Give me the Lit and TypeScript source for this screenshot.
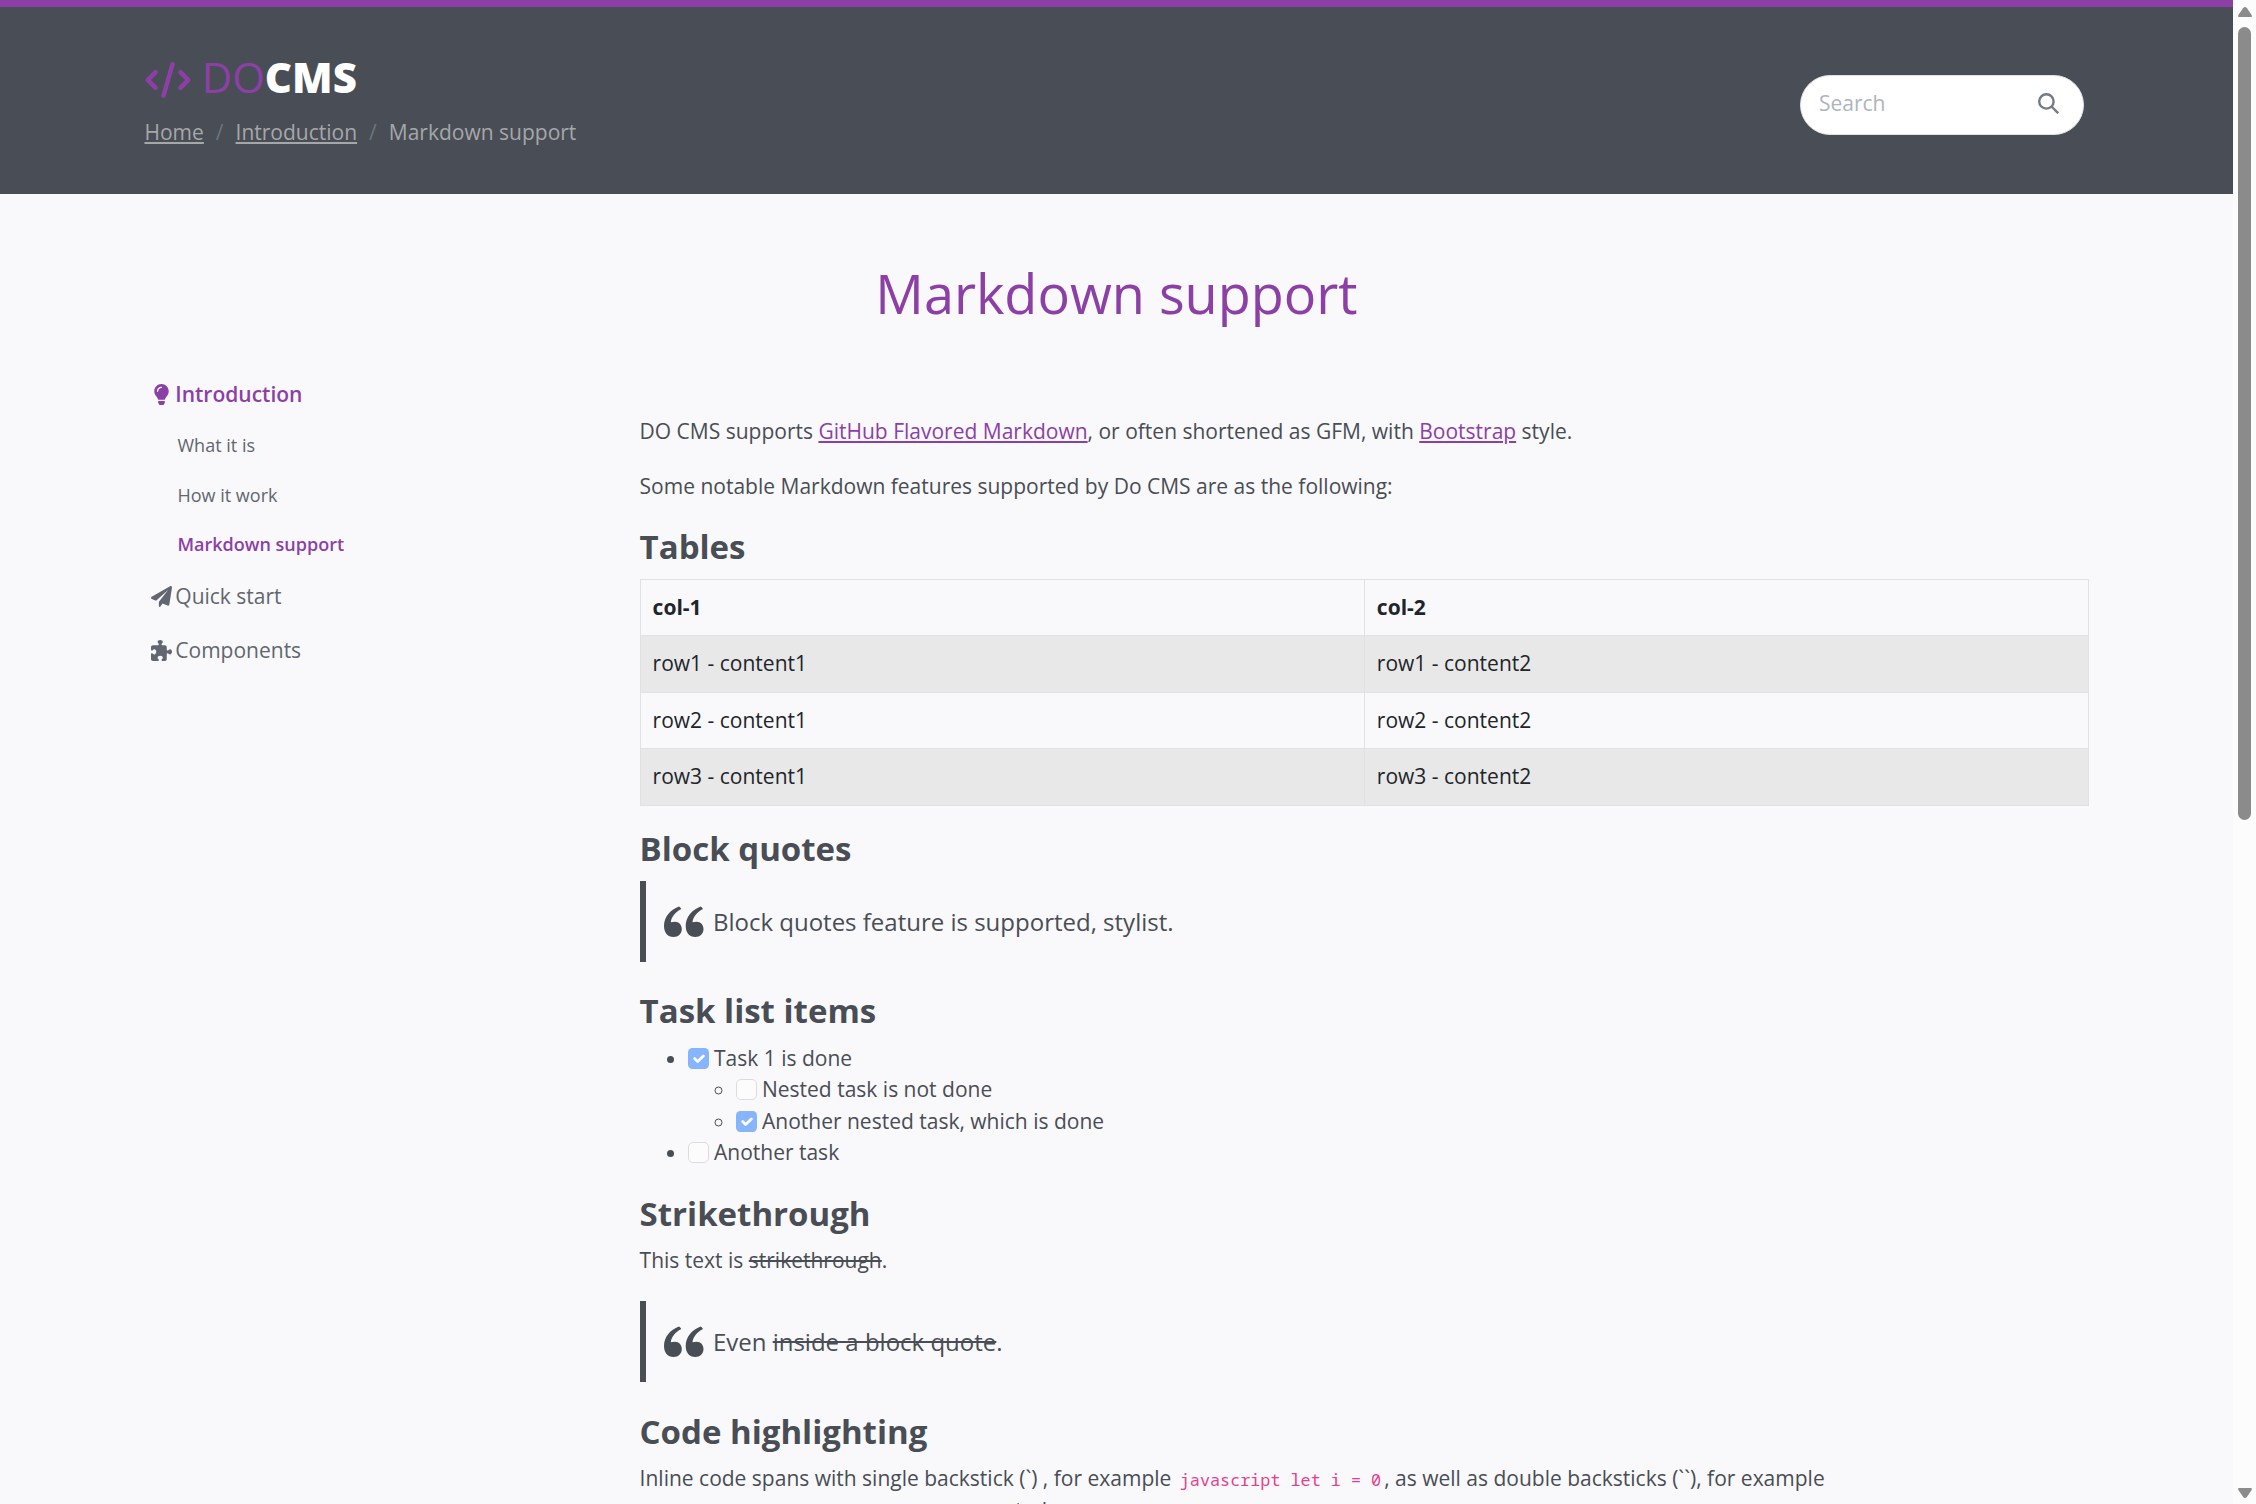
import { LitElement, html, css, svg } from "lit";
import { customElement } from "lit/decorators.js";

const lightbulb = svg`<path fill="currentColor" d="M96.06 454.35c.01 6.29 1.87 12.45 5.36 17.69l17.09 25.69a31.99 31.99 0 0 0 26.64 14.28h61.71a31.99 31.99 0 0 0 26.64-14.28l17.09-25.69a31.989 31.989 0 0 0 5.36-17.69l.04-38.35H96.01l.05 38.35zM0 176c0 44.37 16.45 84.85 43.56 115.78 16.52 18.85 42.36 58.23 52.21 91.45.04.26.07.52.11.78h160.24c.04-.26.07-.51.11-.78 9.85-33.22 35.69-72.6 52.21-91.45C335.55 260.85 352 220.37 352 176 352 78.61 272.91-.3 175.45 0 73.44.31 0 82.97 0 176zm176-80c-44.11 0-80 35.89-80 80 0 8.84-7.16 16-16 16s-16-7.16-16-16c0-61.76 50.24-112 112-112 8.84 0 16 7.16 16 16s-7.16 16-16 16z"/>`;
const plane = svg`<path fill="currentColor" d="M511.6 36.86l-64 415.1c-1.5 9.734-7.375 18.22-15.97 23.05c-4.844 2.719-10.27 4.097-15.68 4.097c-4.188 0-8.319-.8154-12.29-2.472l-122.6-51.1l-50.86 76.29C226.3 508.5 219.8 512 212.8 512C201.300 512 192 502.700 192 491.200v-96.180c0-7.115 2.372-14.030 6.742-19.640L416 96.010l-293.700 264.300L19.690 317.500C8.438 312.800 .8125 302.200 .0625 289.100s5.469-23.720 16.060-29.770l448-255.100c10.690-6.109 23.880-5.547 34 1.406S513.500 24.720 511.600 36.860z"/>`;
const puzzle = svg`<path fill="currentColor" d="M192 104.800c0-9.200-5.800-17.300-13.200-22.800C167.200 73.300 160 61.300 160 48c0-26.500 28.700-48 64-48s64 21.500 64 48c0 13.300-7.200 25.300-18.800 34c-7.400 5.500-13.200 13.600-13.200 22.800c0 12.800 10.400 23.200 23.200 23.200H336c26.500 0 48 21.500 48 48v56.800c0 12.800 10.400 23.200 23.200 23.200c9.200 0 17.300-5.800 22.800-13.200c8.700-11.600 20.700-18.800 34-18.800c26.500 0 48 28.700 48 64s-21.500 64-48 64c-13.300 0-25.300-7.200-34-18.800c-5.500-7.400-13.600-13.200-22.800-13.200c-12.800 0-23.200 10.400-23.200 23.200V464c0 26.500-21.500 48-48 48H279.200c-12.800 0-23.200-10.400-23.200-23.200c0-9.200 5.800-17.300 13.200-22.800c11.600-8.700 18.800-20.700 18.800-34c0-26.500-28.700-48-64-48s-64 21.500-64 48c0 13.300 7.200 25.300 18.800 34c7.400 5.500 13.200 13.600 13.200 22.800c0 12.800-10.400 23.200-23.200 23.200H48c-26.500 0-48-21.500-48-48V343.200C0 330.400 10.400 320 23.200 320c9.200 0 17.300 5.800 22.800 13.200C54.700 344.800 66.700 352 80 352c26.500 0 48-28.700 48-64s-21.500-64-48-64c-13.300 0-25.300 7.200-34 18.800C40.500 250.200 32.400 256 23.200 256C10.400 256 0 245.600 0 232.800V176c0-26.500 21.500-48 48-48H168.800c12.800 0 23.200-10.400 23.200-23.200z"/>`;
const quotePath = "M15 .5Q16.400 1 17.300 3C11 6.500 7.300 11 6.800 16.300 8 15.900 9.400 15.700 11 15.700c4 0 6.800 3.200 6.800 7.300 0 4.700-3.400 8-8.300 8C3.500 31 0 26.500 0 20 0 11 6 4 15 .5Z";
const quote = html`<svg class="quote-mark" viewBox="0 0 40 31" aria-hidden="true"><path fill="currentColor" d=${quotePath}/><path fill="currentColor" transform="translate(21.700 0)" d=${quotePath}/></svg>`;

const box = (done: boolean) => html`<svg class="box" viewBox="0 0 21 21" aria-hidden="true">
  ${done
    ? svg`<rect width="21" height="21" rx="4.5" fill="#86b4fd"/><path d="m6.600 10.600 3 2.800 5.800-5.500" fill="none" stroke="#fff" stroke-width="2.800" stroke-linecap="round" stroke-linejoin="round"/>`
    : svg`<rect x=".5" y=".5" width="20" height="20" rx="4.500" fill="#fcfcfd" stroke="#dcdcdd"/>`}
</svg>`;

@customElement("app-root")
export class AppRoot extends LitElement {
  static styles = css`
    :host { display: flex; width: 2256px; height: 1504px; overflow: hidden; background: #f9f9fb; color: #494d55; font: 21px/31.5px "Open Sans", sans-serif; }
    * { box-sizing: border-box; }
    svg { display: block; flex: none; }
    h1, h2, p, ul, blockquote { margin: 0; padding: 0; }
    .page { width: 2233px; }
    .header { height: 194px; border-top: 7px solid #8c40a6; background: #494d55; display: flex; justify-content: space-between; padding: 46px 149px 0 144.5px; }
    .logo { display: flex; align-items: center; height: 52px; font-size: 42px; line-height: 52px; color: #8c40a6; }
    .logo svg { margin: 2px 11.2px 0 0; }
    .logo span { padding-bottom: 5px; }
    .logo b { color: #fff; font-weight: 800; }
    .crumbs { display: flex; gap: 12px; margin-top: 12px; line-height: 31.5px; color: #a6a7a9; }
    .crumbs i { font-style: normal; color: #6c757d; }
    .search { margin-top: 22px; width: 284px; height: 60px; border-radius: 30px; border: 1px solid #dee2e6; background: #fff; display: flex; align-items: center; justify-content: space-between; padding: 0 24px 3px 18px; color: #adb5bd; }
    .title { margin-top: 61px; text-align: center; font-size: 54px; line-height: 76px; font-weight: 400; color: #8c40a6; }
    .body { display: flex; padding: 47px 0 0 151px; }
    .side { width: 488.6px; padding-top: 0.7px; color: #616670; }
    .top { display: flex; align-items: center; height: 32px; }
    .top svg { width: 21px; height: 21px; margin-right: 3.3px; }
    .sub { padding-left: 26.5px; font-size: 18px; height: 49.5px; line-height: 49.5px; }
    .on { color: #8c40a6; font-weight: 600; }
    .subs { padding: 10.8px 0 10.7px; }
    .gap { margin-bottom: 22px; }
    .doc { width: 1449.5px; padding-top: 37.8px; }
    .doc p { margin-bottom: 24px; }
    .doc a { color: #8c40a6; text-decoration: underline; }
    h2 { font-size: 33px; line-height: 39.6px; font-weight: 700; margin-bottom: 12px; }
    table { width: 1449.5px; border-collapse: collapse; color: #212529; table-layout: fixed; margin: 12.3px 0 23.6px; }
    th, td { border: 1px solid #dee2e6; padding: 12px; text-align: left; line-height: 31.5px; height: 56.5px; }
    .stripe { background: #e8e8e8; }
    blockquote { display: flex; align-items: center; height: 81px; border-left: 6px solid #494d55; padding-left: 18px; font-size: 24px; margin-bottom: 29.4px; }
    p + blockquote { margin-bottom: 29.8px; }
    .quote-mark { width: 40px; height: 31px; margin: 1px 9.3px 0 0; }
    ul { padding-left: 48px; }
    .tasks { margin-bottom: 25px; }
    .box { display: inline-block; width: 21px; height: 21px; vertical-align: -3px; margin-right: 5.4px; }
    code { font: 16.8px "Noto Sans Mono", "DejaVu Sans Mono", monospace; color: #e83e8c; padding: 0 3px; }
    .next { padding-right: 8px; }
    .bar { width: 23px; background: #fcfcfc; display: flex; flex-direction: column; align-items: center; padding: 7px 0 6px; }
    .thumb { width: 13px; height: 793px; border-radius: 7px; background: #8b8b8b; margin: 10px 0 auto 0; }
  `;

  render() {
    return html`
      <div class="page">
        <header class="header">
          <div>
            <div class="logo">
              <svg width="46" height="36" viewBox="0 0 640 512"><path fill="currentColor" d="M392.800 1.200c-17-4.900-34.700 5-39.600 22l-128 448c-4.900 17 5 34.700 22 39.600s34.700-5 39.600-22l128-448c4.900-17-5-34.700-22-39.600zm80.600 120.100c-12.500 12.500-12.500 32.800 0 45.300L562.700 256l-89.400 89.400c-12.500 12.500-12.500 32.800 0 45.300s32.800 12.500 45.300 0l112-112c12.500-12.500 12.500-32.800 0-45.300l-112-112c-12.500-12.500-32.800-12.500-45.300 0zm-306.700 0c-12.500-12.500-32.800-12.500-45.300 0l-112 112c-12.500 12.500-12.500 32.800 0 45.300l112 112c12.500 12.500 32.800 12.500 45.300 0s12.500-32.800 0-45.300L77.300 256l89.400-89.400c12.500-12.500 12.500-32.800 0-45.300z"/></svg>
              <span>DO<b>CMS</b></span>
            </div>
            <nav class="crumbs"><u>Home</u><i>/</i><u>Introduction</u><i>/</i><span>Markdown support</span></nav>
          </div>
          <div class="search"><span>Search</span>
            <svg width="21" height="21" viewBox="0 0 21 21" fill="none" stroke="#747a88" stroke-width="2.4"><circle cx="8.4" cy="8.4" r="7.2"/><path d="m13.500 13.500 6.700 6.700"/></svg>
          </div>
        </header>
        <h1 class="title">Markdown support</h1>
        <div class="body">
          <aside class="side">
            <div class="top on"><svg viewBox="-80 0 512 512">${lightbulb}</svg>Introduction</div>
            <div class="subs">
              <div class="sub">What it is</div>
              <div class="sub">How it work</div>
              <div class="sub on">Markdown support</div>
            </div>
            <div class="top gap"><svg viewBox="0 0 512 512">${plane}</svg>Quick start</div>
            <div class="top"><svg viewBox="0 0 512 512">${puzzle}</svg>Components</div>
          </aside>
          <main class="doc">
            <p>DO CMS supports <a>GitHub Flavored Markdown</a>, or often shortened as GFM, with <a>Bootstrap</a> style.</p>
            <p>Some notable Markdown features supported by Do CMS are as the following:</p>
            <h2>Tables</h2>
            <table>
              <tr><th>col-1</th><th>col-2</th></tr>
              ${[1, 2, 3].map((n) => html`<tr class=${n % 2 ? "stripe" : ""}><td>row${n} - content1</td><td>row${n} - content2</td></tr>`)}
            </table>
            <h2>Block quotes</h2>
            <blockquote>${quote}<span>Block quotes feature is supported, stylist.</span></blockquote>
            <h2>Task list items</h2>
            <ul class="tasks">
              <li>${box(true)}Task 1 is done
                <ul>
                  <li>${box(false)}Nested task is not done</li>
                  <li>${box(true)}Another nested task, which is done</li>
                </ul>
              </li>
              <li>${box(false)}Another task</li>
            </ul>
            <h2>Strikethrough</h2>
            <p>This text is <del>strikethrough</del>.</p>
            <blockquote>${quote}<span>Even <del>inside a block quote</del>.</span></blockquote>
            <h2>Code highlighting</h2>
            <p>Inline code spans with single backstick (\`) , for example <code>javascript let i = 0</code>, as well as double backsticks (\`\`), for example<br><code class="next">javascript console.log(i)</code> are supported.</p>
          </main>
        </div>
      </div>
      <div class="bar">
        <svg width="14" height="10" viewBox="0 0 14 10"><path fill="#8b8b8b" d="M7 0Q8 0 9 1.200L13.600 8Q14.300 10 13 10H1Q-.3 10 .4 8L5 1.200Q6 0 7 0Z"/></svg>
        <div class="thumb"></div>
        <svg width="14" height="10" viewBox="0 0 14 10"><path fill="#8b8b8b" d="M7 10Q6 10 5 8.800L.4 2Q-.3 0 1 0H13Q14.300 0 13.600 2L9 8.800Q8 10 7 10Z"/></svg>
      </div>`;
  }
}
